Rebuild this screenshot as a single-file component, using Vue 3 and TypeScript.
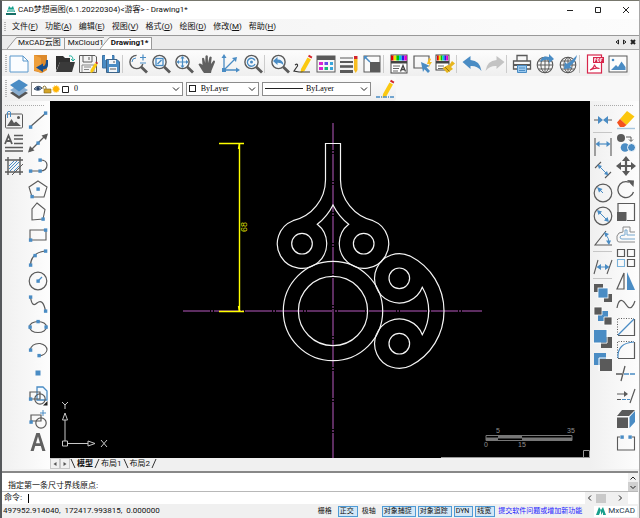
<script setup lang="ts">
import { ref } from 'vue'

const B = '#4a8cc4'
const G = '#5a5a5a'

const line = (d: string, color = G, w = 1) =>
  `<path d="${d}" fill="none" stroke="${color}" stroke-width="${w}"/>`
const fill = (d: string, color = B) => `<path d="${d}" fill="${color}"/>`
const dot = (x: number, y: number) =>
  `<rect x="${x - 1.6}" y="${y - 1.6}" width="3.4" height="3.4" fill="${B}"/>`
const lens =
  `<circle cx="8.5" cy="8" r="6.6" fill="#f4f8fb" stroke="${G}" stroke-width="1.4"/>` +
  line('M13.3 13L19 18.6', G, 2.8)
const spectrum = (w: number) =>
  ['#e00000', '#f0e000', '#00c000', '#00c8e0', '#2020e0', '#e000d0']
    .map((c, i) => `<rect x="${2 + (i * w) / 6}" y="1.5" width="${w / 6}" height="5" fill="${c}"/>`)
    .join('')
const globe =
  `<circle cx="10" cy="11" r="7.8" fill="#f6f6f6" stroke="${G}" stroke-width="1.1"/>` +
  line('M10 3V19M2 11H18M3.5 7H16.5M3.5 15H16.5M10 3C4.5 7 4.5 15 10 19M10 3C15.500 7 15.500 15 10 19')
const pencil =
  fill('M14.500 3.500L18 5.500L11.500 17L7.500 19L8 15Z', '#fbc911') +
  fill('M15 2.500L16 .8L19.400 2.700L18.500 4.600Z', '#d3252b')

const icons: Record<string, string> = {
  newFile: `<path d="M1 2H14L19 7V18H1Z" fill="#fbfdff" stroke="#5b98cc"/>` + line('M14 2V7H19', '#5b98cc'),
  openBook: fill('M2 1H15V16L10 19L2 17Z', '#dd8a2c') + fill('M2 1L9 4V19L2 16Z', '#ee9f3b') + fill('M14 6H16V11Q16 15 11 15.500V18L4 13.500L11 9.500V12Q14 12 14 6Z', '#164f91'),
  folder: fill('M1 2H8L10 4H15V8H5L1 17Z', '#303030') + fill('M5 8H20L17 18H1Z', '#3a3a3a') + line('M14 2Q18 1 18 6M16 5L18 7L20 5', '#24b3a0'),
  save: `<path d="M1.500 1.500H17L18.500 3V18.500H1.500Z" fill="#f4f4f4" stroke="${G}"/>` + line('M5 2V8H14V2M11 3V6') + line('M4 18V11H16V18M6 13H13M6 15.500H11', '#888') + fill('M17 9L19.500 10.500L15 18L12.500 19V16Z', '#fbc911') + fill('M17.200 8.500L18 7.500L20 8.800L19.600 10Z', '#d3252b'),
  saveAs: `<path d="M1.500 1.500H13V14H1.500Z" fill="${B}" stroke="#3e74a6"/>` + fill('M4 1H11V6H4Z', '#fff') + `<path d="M5.500 5.500H16L18.500 8V18.500H5.500Z" fill="${B}" stroke="#3e6488"/>` + fill('M8 6H15V10H8ZM8 13H16V18H8Z', '#f2f6fa') + line('M13 7V9M9 15H15'),
  zoomScale: `<circle cx="8.500" cy="8" r="6.600" fill="none" stroke="${G}" stroke-width="1.400" stroke-dasharray="29 13" stroke-dashoffset="-2"/>` + line('M13.300 13L19 18.600', G, 2.8) + line('M4 8Q4 4 8 4', B) + line('M12 3.500H18M15 .5V6.500M12 9H18', B, 1.2),
  zoomWindow: lens + `<rect x="5" y="4.500" width="7" height="7" fill="none" stroke="${B}" stroke-width="1.300"/>` + line('M6.500 10L10.500 6', B, 1.4),
  zoomExtents: lens + line('M8.500 3V13M3.500 8H13.500', B, 1.2) + fill('M8.500 2L10.500 4.500H6.500ZM8.500 14L10.500 11.500H6.500ZM2.500 8L5 6V10ZM14.500 8L12 6V10Z'),
  hand: fill('M5.500 17L1.500 10.500Q2.500 8.500 5.500 11L5 4.500Q6 3 7.200 4.500L8.200 9L8.500 2Q9.700 .5 10.800 2L11 9L12.500 3Q13.700 1.800 14.700 3.300L14 10L16.500 6.500Q18.200 6 18 8L14.500 16.500L14 19H7Z', '#606060'),
  axes: line('M4 3V16H17', B, 1.3) + line('M4 16L14 6', B, 1.3) + fill('M4 0L6.500 4H1.500ZM20 16L16 13.500V18.500ZM17 3L16 8L12 4Z') + `<rect x="2" y="14" width="4" height="4" fill="${B}"/>`,
  zoomCenter: lens + line('M12 6.500A4 4 0 1 0 12 10', B, 1.3) + `<circle cx="8.500" cy="8" r="1.500" fill="${B}"/>`,
  zoomBack: lens + fill('M3 7L7.500 3V5.500Q13 5.500 13.500 11Q11 8.500 7.500 8.700V11Z'),
  sketch: pencil + line('M2 11Q5 9 4.500 12Q3 14 1 17L6 18H17', '#333', 1.2),
  props: `<rect x="1" y="2" width="18" height="16" fill="#f7f7f7" stroke="${G}"/>` + fill('M1 2H19V6H1Z', G) + fill('M3 8H7V11H3ZM3 13H7V16H3Z', '#d923d2') + fill('M8.500 8H12V11H8.500Z', '#6548e8') + fill('M8.500 13H12V16H8.500Z', '#16b979') + fill('M14 8H17V11H14ZM14 13H17V16H14Z', '#37a5db'),
  lineweight: line('M1 4H14', G, 1) + line('M1 8H14', G, 2) + line('M1 12.500H14', G, 2.6) + line('M1 17.500H14', G, 3) + fill('M15 5H18.500V16L16.700 19L15 16Z', '#f8bd20') + fill('M15 2H18.500V5H15Z', '#d3252b'),
  scaleBox: `<rect x="2" y="2" width="16" height="16" fill="#fafafa" stroke="${G}"/>` + fill('M8 8H18V18H8Z', G) + line('M3 3L8 8', B, 1.5) + fill('M2 2H6L2 6Z'),
  layerStyle: `<rect x="2" y="1" width="16" height="18" fill="#fff" stroke="#444"/>` + spectrum(16) + fill('M2 7H18V9.500H2Z', '#444') + line('M4 12H11M4 14.500H10M4 17H9', '#666') + line('M11.500 17.500L14 11.500L16.500 17.500M12 15.500H16', '#444', 1.3),
  quickSelect: line('M11 14H2V2H17V8', G, 1.2) + fill('M9 8L18 12L14.500 13.300L18 17L16 19L12.500 15.200L11 18Z') + fill('M17 4L15 10H17.500L16 14L20 8H17.700L19 5Z', '#f7be25'),
  matchProps: `<rect x="1" y="1" width="13" height="15" fill="#fff" stroke="#444"/>` + spectrum(11) + fill('M1 7H14V9.500H1Z', '#444') + line('M3 12H9M3 14.500H9', '#666') + fill('M17 7L20 9.500L16 13L18 15L12 19L7.500 14L13 11L14 11.500Z', '#e6b51e') + line('M10 13L14.500 17.500', '#9a7510'),
  undo: fill('M.5 8L8.500 2V6Q18 6.500 19.500 17Q15 11.500 8.500 12V15Z'),
  redo: fill('M19.500 8L11.500 2V6Q2 6.500 .5 17Q5 11.500 11.500 12V15Z', '#c3c3c3'),
  print: `<path d="M5 7V1.500H15V7M1.500 7H18.500V15H1.500Z" fill="#f7f7f7" stroke="${G}" stroke-width="1.300"/>` + fill('M2 10H18V12H2Z', G) + `<path d="M5.500 11.500H14.500V18.500H5.500Z" fill="#9bc9ee" stroke="${B}"/>` + line('M7 14H13M7 16.500H13', B),
  publish: globe + fill('M5 8Q7 1 14 3V0L19 5L14 9V6Q10 5 5 8Z'),
  download: globe + fill('M19 1Q18 8 12 12L14 14L6 15L7 8L9 10Q14 7 19 1Z'),
  pdf: `<rect x="2.500" y="1" width="14" height="18" fill="#fff" stroke="#d7264b" stroke-width="1.200"/>` + fill('M8 3H19V9H8Z', '#d7264b') + line('M9.500 8V4.500H11V6H9.500M12.500 4.500V7.500H14V4.500H12.500M15.500 8V4.500H17.500M15.500 6H17', '#fff', 0.8) + line('M5 16Q9 14 9.500 10.500Q10 14 14.500 14.500Q10 13.500 5 16', '#d7264b', 1.2),
  image: `<rect x="1" y="2" width="18" height="16" fill="#fcfcfc" stroke="${G}"/>` + fill('M3 16L8 11L10 13L13.500 7.500L17.500 13V16Z') + `<circle cx="5" cy="6" r="1.300" fill="${B}"/>`,
  layers: fill('M10 9L19 14L10 20L1 14Z', '#555') + fill('M10 6L19 11L10 17L1 11Z', '#8aaed0') + fill('M10 .5L19 6L10 12.500L1 6Z'),
  penLine: pencil + `<path d="M1 18H19" stroke="${B}" stroke-width="1.500" stroke-dasharray="4 1 1 1"/>`,
  picture: `<rect x="1.500" y="4" width="17" height="14" rx="1" fill="none" stroke="${G}"/>` + fill('M3 16L7.500 9L10 13L12 11.500L17 16Z', G) + `<circle cx="14.500" cy="7.500" r="1.500" fill="${G}"/>` + line('M3.500 8V2Q5 .5 6.500 2V7', B),
  mtext: line('M1 11L4.500 2.500L8 11M2.500 8H6.500', G, 1.8) + line('M10 2.500H19M10 6H19M10 10.500H19M1 14.500H19M1 18H19', G, 1.3),
  hatch: line('M4 1V19M16 1V19M1 4H19M1 16H19', G, 1.4) + line('M5 10L10 5M5 13L13 5M6 15L15 6M10 15L15 10', B) + line('M8 19L19 8', G, 1),
  line: line('M2 17L18 3', G, 1.2) + dot(2.5, 17) + dot(17.5, 3),
  ray: line('M2 18L18 2', G, 1.2) + fill('M0 19.500L2 13L6.500 17.500ZM20 .5L18 7L13.500 2.500Z', G) + dot(10, 10),
  polyline: line('M12 4Q19 4 19 9Q19 15 12 15H2', G, 1.2) + dot(12, 4) + dot(2.5, 15) + dot(12, 15),
  polygon: line('M10 2L19 8L16 18H4L1 8Z', G, 1.1) + dot(10, 10) + dot(4, 17.5),
  pentagon: line('M9 1L17 7.500L15 17L4 18V7Z', G, 1.1) + dot(15, 17),
  rect: line('M2 5H18V15H2Z', G, 1.1) + dot(17.5, 5) + dot(2.5, 15),
  arc: line('M2.500 17Q3 5 17 3', G, 1.2) + dot(2.5, 17) + dot(7, 7.5) + dot(17.5, 3),
  circle: `<circle cx="10" cy="10" r="8.800" fill="none" stroke="${G}" stroke-width="1.200"/>` + line('M10 10L14 6', B, 1.3) + dot(10, 10),
  spline: line('M2.500 3Q4 14 9 9Q15 4 17.500 17', G, 1.2) + dot(2.5, 3) + dot(17.5, 17),
  ellipse: `<ellipse cx="10" cy="10" rx="8.500" ry="5.500" fill="none" stroke="${G}" stroke-width="1.200"/>` + dot(10, 4.5) + dot(2, 10) + dot(18, 10),
  ellipseArc: line('M2 10Q4 3 12 3.500Q19 5 19 10Q18 15 11 16', G, 1.1) + dot(2.5, 10) + dot(11, 15.5),
  point: `<rect x="7.500" y="7.500" width="5" height="5" fill="${B}"/>`,
  blockInsert: `<path d="M9 1H15L19 5V14H9Z" fill="#f5faff" stroke="${B}" stroke-width="1.300"/>` + line('M2 13V6H12V13Z', G, 1.2) + `<circle cx="12" cy="13" r="5.200" fill="none" stroke="${G}" stroke-width="1.200"/>` + dot(2.5, 13) + fill('M15 19.500H19.500V15Z', '#222'),
  blockCreate: line('M3 12V6H13V12Z', G, 1.2) + `<circle cx="13" cy="14" r="5.200" fill="none" stroke="${G}" stroke-width="1.200"/>` + dot(3, 13) + line('M12 4H18M15 1V7', B),
  text: fill('M2.500 19L8.300 1H11.700L17.500 19H14.300L12.800 14H7.200L5.700 19ZM8 11.200H12L10 4.500Z', '#616161'),
  join: line('M1 10H6M14 10H19', G, 1.1) + fill('M5 6L10 10L5 14ZM15 6L10 10L15 14Z'),
  dimLinear: line('M2 1V19M18 1V19', G, 1.1) + line('M4 7H16', B, 1.2) + fill('M2.500 7L6.500 4V10ZM17.500 7L13.500 4V10Z'),
  dimAligned: line('M2 8L8 2M12 18L18 12', G, 1.1) + line('M6 6L14 14', B) + fill('M4.500 4.500L9 6L6 9ZM15.500 15.500L11 14L14 11Z'),
  dimRadius: `<circle cx="10" cy="10" r="8.800" fill="none" stroke="${G}" stroke-width="1.200"/>` + line('M10 10L6 6', B) + fill('M4 4L9.500 6L6 9.500Z'),
  dimDiameter: `<circle cx="10" cy="10" r="8.800" fill="none" stroke="${G}" stroke-width="1.200"/>` + line('M5 5L15 15', B) + fill('M4 4L9 5.500L5.500 9ZM16 16L11 14.500L14.500 11Z'),
  dimAngle: line('M13 2L2 16H19', G, 1.1) + line('M13 6Q16 9 16 14', B) + fill('M11 3L16 5L12.500 8ZM16 16L13 11.500L18 11.500Z'),
  dimSlant: line('M1 18L5 4M14 18L19 4', G, 1.1) + line('M5 11H15', B) + fill('M3.500 11L8 8V14ZM16.500 11L12 8V14Z'),
  front: fill('M1 1H10V9H1ZM11 11H19V19H11Z', G) + `<rect x="5" y="5" width="10" height="10" fill="${B}" stroke="#fff" stroke-width=".8"/>`,
  middle: fill('M5 5H15V15H5Z') + `<path d="M1 1H9V9H1ZM11 11H19V19H11Z" fill="${G}" stroke="#fff" stroke-width=".8"/>`,
  above: fill('M8 8H19V19H8Z', G) + line('M0 14H14V0', '#fff') + fill('M1 1H13.500V13.500H1Z'),
  below: fill('M1 1H13V13H1Z') + line('M6 19V6H19', '#fff') + fill('M7 7H19V19H7Z', G),
  erase: fill('M11 1L18.500 6.500L10.500 15L4 9Z', '#fcc60c') + fill('M4 9L10.500 15L8 17H4L1 12.500Z', '#f4511e') + line('M1 18.500H19', '#a8c6dd', 1.4),
  copy: `<circle cx="5" cy="5" r="4" fill="${G}"/><circle cx="9" cy="14.500" r="4.300" fill="${B}"/><circle cx="15.500" cy="14.500" r="4" fill="${B}" stroke="#fff"/>` + line('M10 4H15V8M13 6.500L15 8.500L17 6.500'),
  move: line('M10 3V17M3 10H17', G, 2.2) + fill('M10 0L14 5H6ZM10 20L14 15H6ZM0 10L5 6V14ZM20 10L15 6V14Z', G),
  rotate: line('M13 3.200A8 8 0 1 0 17.500 13', G, 1.3) + fill('M11 1L18 1.500L17.500 8Z', G),
  scale: line('M2 10V1.500H18.500V18.500H11', G, 1.2) + fill('M1 10H10.500V19H1Z', G),
  offset: line('M19 17H3Q1 17 1 14V11Q2 7 7 7V2H14V7H19', '#8a8a8a') + line('M19 14H6Q4 14 4 12Q4 10 9 10V5H11V10H19', '#75a7ce'),
  array: line('M1.500 1.500H8.500V8.500H1.500ZM11.500 1.500H18.500V8.500H11.500ZM11.500 11.500H18.500V18.500H11.500Z', G, 1.2) + line('M1.500 11.500H8.500V18.500H1.500Z', '#7ab2da', 1.1),
  mirror: line('M8 2V18H1Z', G, 1.2) + fill('M11 1V19H19Z'),
  curve: line('M1 14Q3 3 8 8L12 13Q16 16 19 7', G, 1.2),
  chamfer: `<path d="M1.500 18V1.500H18" fill="none" stroke="${G}" stroke-dasharray="1 1.500"/>` + line('M18.500 2V18.500H2', G, 1.2) + line('M2 18L18 2', B, 1.3),
  fillet: `<path d="M1.500 18V1.500H18" fill="none" stroke="${G}" stroke-dasharray="1 1.500"/>` + line('M18.500 2V18.500H2', G, 1.2) + line('M2 18Q1 3 18 2', B, 1.2),
  trim: line('M0 11H6M5 18L9 3', G, 1.3) + `<path d="M8 11H20" stroke="${B}" stroke-width="1.300" stroke-dasharray="5 1"/>`,
  extend: line('M1 8H9M14 17L19 3', G, 1.2) + fill('M8 5L12 8L8 11Z', G) + line('M1 13.500H5', G) + `<path d="M6 13.500H14" stroke="${B}" stroke-dasharray="4 1"/>`,
  cube: fill('M6 1H19L13 7H1Z', G) + fill('M1 8.500H12V19H1Z', G) + fill('M13.500 8L19 2V13L13.500 19Z'),
  break: line('M4 5H1.500V18H18.500V5H16', G, 1.1) + dot(6, 5) + dot(14, 5),
}

const mainTools: string[][] = [
  ['newFile', 'openBook', 'folder', 'save', 'saveAs'],
  ['zoomScale', 'zoomWindow', 'zoomExtents', 'hand', 'axes', 'zoomCenter'],
  ['zoomBack', 'sketch', 'props', 'lineweight', 'scaleBox'],
  ['layerStyle', 'quickSelect', 'matchProps'],
  ['undo', 'redo'],
  ['print', 'publish', 'download'],
  ['pdf', 'image'],
]
const leftA = [['picture', 'mtext', 'hatch']]
const leftB = [['line', 'ray', 'polyline', 'polygon', 'pentagon', 'rect', 'arc', 'circle', 'spline', 'ellipse', 'ellipseArc', 'point', 'blockInsert', 'blockCreate', 'text']]
const rightA = [['join'], ['dimLinear', 'dimAligned', 'dimRadius', 'dimDiameter', 'dimAngle'], ['dimSlant'], ['front', 'middle', 'above', 'below']]
const rightB = [['erase', 'copy', 'move', 'rotate', 'scale', 'offset', 'array', 'mirror', 'curve', 'chamfer', 'fillet', 'trim', 'extend', 'cube', 'break']]

const menus: [string, string][] = [['文件', 'F'], ['功能', 'A'], ['编辑', 'E'], ['视图', 'V'], ['格式', 'O'], ['绘图', 'D'], ['修改', 'M'], ['帮助', 'H']]
const docs = ['MxCAD云图', 'MxCloud1', 'Drawing1*']
const activeDoc = ref(2)
const sheets = ['模型', '布局1', '布局2']
const modes = ref([
  { name: '栅格', on: false },
  { name: '正交', on: true },
  { name: '极轴', on: false },
  { name: '对象捕捉', on: true },
  { name: '对象追踪', on: true },
  { name: 'DYN', on: true },
  { name: '线宽', on: true },
])
const command = ref('')
</script>

<template>
  <div class="window">
    <header class="title">
      <svg class="logo" viewBox="0 0 10 10" aria-hidden="true">
        <path d="M1 7L3 1L5 3L7 1L9 7Z" fill="#18a08c" /><path d="M3 7V4M5 7V4M7 7V4" stroke="#d8f4ee" /><path d="M0 9H10" stroke="#176f66" stroke-width="2" />
      </svg>
      <h1>CAD梦想画图(6.1.20220304)&lt;游客&gt; - Drawing1*</h1>
      <div class="controls">
        <button aria-label="Minimize"><svg viewBox="0 0 8 8"><path d="M1 4.500H7" /></svg></button>
        <button aria-label="Maximize"><svg viewBox="0 0 8 8"><path d="M1.500 1.500H6.500V6.500H1.500Z" /></svg></button>
        <button aria-label="Close"><svg viewBox="0 0 8 8"><path d="M1 1L7 7M7 1L1 7" /></svg></button>
      </div>
    </header>

    <nav class="menu">
      <i class="grip"></i>
      <button v-for="[name, key] in menus" :key="key">{{ name }}(<u>{{ key }}</u>)</button>
    </nav>

    <div class="docs">
      <button v-for="(doc, i) in docs" :key="doc" :class="['doc', { active: i === activeDoc, flat: i === 1 }]" @click="activeDoc = i">
        <svg v-if="i !== 1" viewBox="0 0 10 12" aria-hidden="true"><path d="M0 12L9 1L10 .5V12Z" /><path class="edge" d="M0 12L9 1L10 .5" /></svg>
        <span>{{ doc }}</span>
      </button>
      <div class="doc-nav">
        <button aria-label="Previous"><svg viewBox="0 0 6 6"><path d="M4.500 1V5L2 3Z" /></svg></button>
        <button aria-label="Next"><svg viewBox="0 0 6 6"><path d="M1.500 1V5L4 3Z" /></svg></button>
        <button aria-label="Close drawing"><svg class="bold" viewBox="0 0 6 6"><path d="M1 1L5 5M5 1L1 5" /></svg></button>
      </div>
    </div>

    <div class="bars">
      <div class="bar">
        <i class="grip"></i>
        <template v-for="(group, g) in mainTools" :key="g">
          <i v-if="g" class="sep"></i>
          <button v-for="name in group" :key="name" class="tool" :aria-label="name"><svg viewBox="0 0 20 20" v-html="icons[name]"></svg></button>
        </template>
      </div>
      <div class="bar short">
        <i class="grip"></i>
        <button class="tool" aria-label="layers"><svg viewBox="0 0 20 20" v-html="icons.layers"></svg></button>
        <div class="combo layer">
          <svg class="state" viewBox="0 0 36 10" aria-hidden="true">
            <path d="M0 5Q4 0 8 4Q5 8 0 5" fill="#8da3bb" stroke="#42566e" /><circle cx="4" cy="4.500" r="1.500" fill="#233c66" />
            <path d="M9 5V3Q10 1 12 3V5" fill="none" stroke="#8c7633" /><path d="M10 5H17V9H10Z" fill="#d4a52a" stroke="#80641d" stroke-width=".6" />
            <circle cx="22" cy="5" r="3" fill="#ffb300" /><circle cx="22" cy="5" r="3.500" fill="none" stroke="#ffc93c" stroke-dasharray="1 1" />
            <path d="M28.500 2.500H34.500V8.500H28.500Z" fill="#fff" stroke="#222" />
          </svg>
          <select aria-label="图层"><option>0</option></select>
          <svg class="chev" viewBox="0 0 8 8"><path d="M1 2.500L4 5.500L7 2.500" /></svg>
        </div>
        <div class="combo color">
          <i class="swatch"></i>
          <select aria-label="颜色"><option>ByLayer</option></select>
          <svg class="chev" viewBox="0 0 8 8"><path d="M1 2.500L4 5.500L7 2.500" /></svg>
        </div>
        <div class="combo ltype">
          <i class="rule"></i>
          <select aria-label="线型"><option>ByLayer</option></select>
          <svg class="chev" viewBox="0 0 8 8"><path d="M1 2.500L4 5.500L7 2.500" /></svg>
        </div>
        <button class="tool" aria-label="penLine"><svg viewBox="0 0 20 20" v-html="icons.penLine"></svg></button>
      </div>
    </div>

    <main class="work">
      <aside class="dock">
        <i class="grip wide"></i>
        <div v-for="(col, c) in [leftA, leftB]" :key="c" class="column">
          <button v-for="name in col[0]" :key="name" class="tool" :aria-label="name"><svg viewBox="0 0 20 20" v-html="icons[name]"></svg></button>
        </div>
      </aside>

      <section class="view">
        <svg class="canvas" viewBox="50 101 540 357" role="img" aria-label="Drawing1">
          <g class="axis">
            <path d="M183 311H482" /><path d="M333 123V458" />
          </g>
          <g class="shape">
            <circle cx="333" cy="311" r="49.700" /><circle cx="333" cy="311" r="34.600" />
            <circle cx="302" cy="243.700" r="10.300" /><circle cx="363.700" cy="243.700" r="10.300" />
            <circle cx="399.300" cy="278.300" r="10.300" /><circle cx="399.300" cy="343.700" r="10.300" />
            <path d="M333 143.500H325.500V180A42 42 0 0 1 293 220.700A24.700 24.700 0 1 0 317.300 224.300A56 56 0 0 0 333 205A56 56 0 0 0 348.700 224.300A24.700 24.700 0 1 0 373 220.700A42 42 0 0 1 340.500 180V143.500Z" />
            <path d="M410.500 256.300A61.400 61.400 0 0 1 410.500 365.700A24.700 24.700 0 1 1 422.300 334.700A47 47 0 0 0 422.300 287.300A24.700 24.700 0 1 1 410.500 256.300Z" />
          </g>
          <g class="dim">
            <path d="M219 143.500H244M219 311.500H244M239.500 143.500V311.500" /><path d="M238.500 149L239.500 143.500M238.500 306L239.500 311.500" />
            <text x="247" y="232" transform="rotate(-90 247 232)">68</text>
          </g>
          <g class="ucs">
            <path d="M62.500 441H67.500V446H62.500ZM65 441V420M67.500 443.500H88M65 413L62.500 420H67.500ZM95 443.500L88 441V446Z" />
            <path d="M62 402L65 405L68 402M65 405V409M101 440L107 447M107 440L101 447" />
          </g>
          <g class="scale">
            <path d="M486 435.500H572V440.500H486ZM486 438H572" /><path class="solid" d="M498 435H522V438H498ZM486 438H498V441H486ZM522 438H572V441H522Z" />
            <text x="498" y="433">5</text><text x="571" y="433">35</text><text x="486" y="447">0</text><text x="522" y="447">15</text>
          </g>
          <path class="edge" d="M441 457.500H590M583.500 457V450.500H589.500V457" />
        </svg>
        <div class="sheets">
          <button class="step" aria-label="Previous sheet"><svg viewBox="0 0 6 6"><path d="M4.500 1V5L1.500 3Z" /></svg></button>
          <button class="step" aria-label="Next sheet"><svg viewBox="0 0 6 6"><path d="M1.500 1V5L4.500 3Z" /></svg></button>
          <template v-for="(sheet, i) in sheets" :key="sheet">
            <svg class="slant" viewBox="0 0 6 11" aria-hidden="true"><path :d="i === 1 ? 'M1 10L5 1' : 'M1 1L5 10'" /></svg>
            <button :class="{ current: i === 0 }">{{ sheet }}</button>
          </template>
          <svg class="slant" viewBox="0 0 6 11" aria-hidden="true"><path d="M1 10L5 1" /></svg>
        </div>
      </section>

      <aside class="dock right">
        <i class="grip wide"></i>
        <div v-for="(col, c) in [rightA, rightB]" :key="c" class="column">
          <template v-for="(group, g) in col" :key="g">
            <i v-if="g" class="hsep"></i>
            <button v-for="name in group" :key="name" class="tool" :aria-label="name"><svg viewBox="0 0 20 20" v-html="icons[name]"></svg></button>
          </template>
        </div>
      </aside>
    </main>

    <section class="console">
      <div class="history">
        <p>指定第一条尺寸界线原点:</p>
        <div class="vscroll">
          <button aria-label="Up"><svg viewBox="0 0 8 8"><path d="M1.500 5.500L4 3L6.500 5.500" /></svg></button>
          <button class="dark" aria-label="Down"><svg viewBox="0 0 8 8"><path d="M1.500 3L4 5.500L6.500 3" /></svg></button>
        </div>
      </div>
      <div class="prompt">
        <label for="cmd">命令:</label>
        <i class="caret"></i>
        <input id="cmd" v-model="command" type="text" />
        <div class="hscroll">
          <button aria-label="Left"><svg viewBox="0 0 8 8"><path d="M5 1.500L2.500 4L5 6.500" /></svg></button>
          <i class="thumb"></i>
          <button aria-label="Right"><svg viewBox="0 0 8 8"><path d="M3 1.500L5.500 4L3 6.500" /></svg></button>
        </div>
      </div>
    </section>

    <footer class="status">
      <span class="coords">497952.914040,&nbsp; 172417.993815,&nbsp; 0.000000</span>
      <button v-for="mode in modes" :key="mode.name" :class="{ on: mode.on }" @click="mode.on = !mode.on">{{ mode.name }}</button>
      <a href="#">提交软件问题或增加新功能</a>
      <span class="brand">
        <svg viewBox="0 0 10 10" aria-hidden="true"><path d="M0 9L3 1L5 4L3 9ZM5 9V4L7 1L10 9H7V6Z" fill="#18a08c" /></svg>MxCAD
      </span>
    </footer>
  </div>
</template>

<style>
body {
  margin: 0;
}
</style>

<style scoped>
.window {
  box-sizing: border-box;
  min-height: 100vh;
  display: flex;
  flex-direction: column;
  border-top: 1px solid #77776d;
  border-left: 2px solid #55585b;
  border-right: 1px solid #a8a8a8;
  background: #f0f0f0;
  color: #111;
  font: 8px/10px Roboto, "Noto Sans CJK SC", sans-serif;
  white-space: nowrap;
}
button {
  margin: 0;
  padding: 0;
  border: 0;
  background: none;
  color: inherit;
  font: inherit;
}
svg {
  display: block;
}
.grip {
  flex: none;
  width: 2px;
  height: 18px;
  background: repeating-linear-gradient(#b5b5b5 0 1px, transparent 1px 2px);
}
.title {
  display: flex;
  align-items: center;
  height: 18px;
  padding-left: 4px;
  background: #fff;
}
.logo {
  width: 10px;
  height: 10px;
}
h1 {
  margin: 0;
  padding-left: 2px;
  flex: 1;
  font: inherit;
}
.controls {
  display: flex;
  gap: 20px;
  padding-right: 9px;
}
.controls svg,
.chev,
.vscroll svg,
.hscroll svg {
  width: 8px;
  height: 8px;
  fill: none;
  stroke: #222;
  stroke-width: 1;
}
.menu {
  display: flex;
  align-items: center;
  gap: 7px;
  height: 16px;
  padding-left: 2px;
  background: linear-gradient(90deg, #f2f2f2, #fcfcfc);
}
.menu .grip {
  height: 10px;
  margin-right: -1px;
}
.docs {
  display: flex;
  align-items: flex-end;
  height: 15px;
  padding-left: 5px;
  border-top: 1px solid #999;
  border-bottom: 1px solid #a8a8a8;
  box-sizing: border-box;
  background: #ebebeb;
}
.doc {
  display: flex;
  height: 12px;
}
.doc svg {
  width: 10px;
  height: 12px;
  fill: #f5f5f5;
}
.doc .edge {
  fill: none;
  stroke: #999;
}
.doc span {
  box-sizing: border-box;
  height: 12px;
  padding: 0 3px 0 1px;
  border-top: 1px solid #999;
  border-right: 1px solid #999;
  background: #f5f5f5;
}
.doc.flat span {
  padding-left: 3px;
  border-right: 0;
  padding-right: 0;
}
.doc.active {
  font-weight: bold;
  margin-left: -4px;
}
.doc.active span {
  background: #fff;
}
.doc.active svg {
  fill: #fff;
}
.doc-nav {
  display: flex;
  gap: 2px;
  margin-left: auto;
  padding: 0 3px 4px 0;
}
.doc-nav svg {
  width: 6px;
  height: 6px;
  fill: none;
  stroke: #222;
  stroke-width: 1;
}
.doc-nav svg.bold {
  stroke-width: 2;
}
.bars {
  padding-top: 1px;
  background: #f8f8f8;
}
.bar {
  display: flex;
  align-items: center;
  height: 25px;
  padding-left: 3px;
  margin-right: 9px;
  border-radius: 0 3px 3px 0;
  background: linear-gradient(#fcfcfc, #efefef);
}
.bar.short {
  width: 391px;
  margin-right: 0;
}
.tool {
  flex: none;
  display: grid;
  place-items: center;
  width: 23px;
  height: 23px;
}
.tool svg {
  width: 20px;
  height: 20px;
}
.sep {
  width: 1px;
  height: 18px;
  margin-right: 3px;
  background: #ccc;
}
.combo {
  display: flex;
  align-items: center;
  box-sizing: border-box;
  height: 14px;
  margin-left: 1px;
  margin-right: 2px;
  padding: 0 2px;
  border: 1px solid #8c8c8c;
  background: #fff;
}
.combo select {
  flex: 1;
  min-width: 0;
  height: 12px;
  padding: 0;
  border: 0;
  appearance: none;
  background: none;
  color: #000;
  font: 8px/12px "Liberation Serif", serif;
}
.combo .state {
  width: 36px;
  height: 10px;
  margin-right: 4px;
}
.layer {
  width: 153px;
}
.color {
  width: 74px;
}
.ltype {
  width: 110px;
}
.swatch {
  box-sizing: border-box;
  width: 7px;
  height: 7px;
  margin-right: 5px;
  border: 1px solid #222;
}
.rule {
  width: 38px;
  height: 1px;
  margin-right: 3px;
  background: #222;
}
.work {
  flex: 1;
  display: flex;
}
.dock {
  flex: none;
  box-sizing: border-box;
  width: 48px;
  display: grid;
  grid-template-columns: 24px 23px;
  grid-template-rows: 7px 1fr;
  background: linear-gradient(90deg, #f0f0f0, #fdfdfd);
}
.dock.right {
  width: 49px;
  padding-left: 1px;
  grid-template-columns: 23px 23px;
}
.grip.wide {
  grid-column: 1 / 3;
  width: 40px;
  height: 1px;
  margin: 4px 0 0 3px;
  background: repeating-linear-gradient(90deg, #aaa 0 1px, transparent 1px 2px);
}
.column {
  display: flex;
  flex-direction: column;
}
.hsep {
  height: 1px;
  margin: 1px 2px 2px;
  background: #c6c6c6;
}
.view {
  flex: 1;
  min-width: 0;
  display: flex;
  flex-direction: column;
}
.canvas {
  flex: 1;
  width: 100%;
  min-height: 0;
  background: #000;
  fill: none;
}
.axis {
  stroke: #5c2d60;
  stroke-width: 2;
  stroke-dasharray: 27 1 2 1;
}
.shape {
  stroke: #f4f4f4;
  stroke-width: 1.2;
}
.dim {
  stroke: #ff0;
  stroke-width: 1.4;
}
.dim text {
  fill: #d5d500;
  stroke: none;
  font: 9px "Liberation Sans", sans-serif;
}
.ucs {
  stroke: #c8c8c8;
}
.scale {
  stroke: #777;
  stroke-width: 1;
}
.scale .solid {
  fill: #777;
  stroke: none;
}
.scale text {
  fill: #909090;
  stroke: none;
  text-anchor: middle;
  font: 7px "Liberation Sans", sans-serif;
}
.canvas > .edge {
  stroke: #999;
}
.sheets {
  display: flex;
  align-items: center;
  height: 11px;
}
.step {
  box-sizing: border-box;
  width: 10px;
  height: 11px;
  padding: 2px 1px;
  border: 1px solid #c8c8c8;
}
.step svg {
  width: 6px;
  height: 6px;
  fill: #555;
}
.slant {
  width: 6px;
  height: 11px;
  fill: none;
  stroke: #333;
}
.sheets .current {
  font-weight: bold;
}
.sheets button:not(.step) {
  padding: 0 1px;
}
.console {
  margin: 2px 1px 0 0;
  border-top: 2px solid #888;
  background: #fff;
  font: 8px/10px "Liberation Serif", "Noto Sans CJK SC", serif;
}
.history {
  display: flex;
  justify-content: space-between;
  height: 18px;
  border-bottom: 1px solid #b8b8b8;
}
.history p {
  align-self: flex-end;
  margin: 0;
  padding-left: 6px;
}
.vscroll {
  width: 10px;
  background: #f0f0f0;
}
.vscroll button {
  display: grid;
  place-items: center;
  width: 10px;
  height: 9px;
}
.vscroll .dark {
  background: #d0d0d0;
}
.prompt {
  display: flex;
  align-items: center;
  height: 12px;
  padding: 0 10px 0 2px;
}
.caret {
  width: 1px;
  height: 9px;
  margin-left: 6px;
  background: #000;
}
.prompt input {
  flex: 1;
  min-width: 0;
  height: 10px;
  padding: 0;
  border: 0;
  outline: 0;
  background: none;
  font: inherit;
}
.hscroll {
  display: flex;
  align-items: center;
  justify-content: space-between;
  width: 43px;
  height: 12px;
  background: #f0f0f0;
}
.hscroll button:first-child {
  padding-left: 1px;
}
.hscroll button:last-child {
  padding-right: 4px;
}
.thumb {
  width: 10px;
  height: 9px;
  margin-right: 8px;
  background: #c9c9c9;
}
.status {
  display: flex;
  align-items: center;
  height: 14px;
  padding-right: 2px;
}
.coords {
  flex: 1;
  padding-left: 1px;
}
.status button {
  box-sizing: border-box;
  height: 11px;
  margin-right: 2px;
  padding: 0 3px 0 1px;
  border: 1px solid transparent;
  font-size: 7px;
  line-height: 9px;
}
.status .on {
  border-color: #4f9bd6;
  background: #d3e7f6;
}
.status a {
  padding-left: 1px;
  color: #1a1aff;
  font-size: 7px;
  text-decoration: none;
}
.brand {
  display: flex;
  align-items: center;
  gap: 2px;
  height: 11px;
  margin-left: 12px;
  padding: 0 2px;
  background: #fff;
  color: #24384c;
}
.brand svg {
  width: 10px;
  height: 10px;
}
</style>
